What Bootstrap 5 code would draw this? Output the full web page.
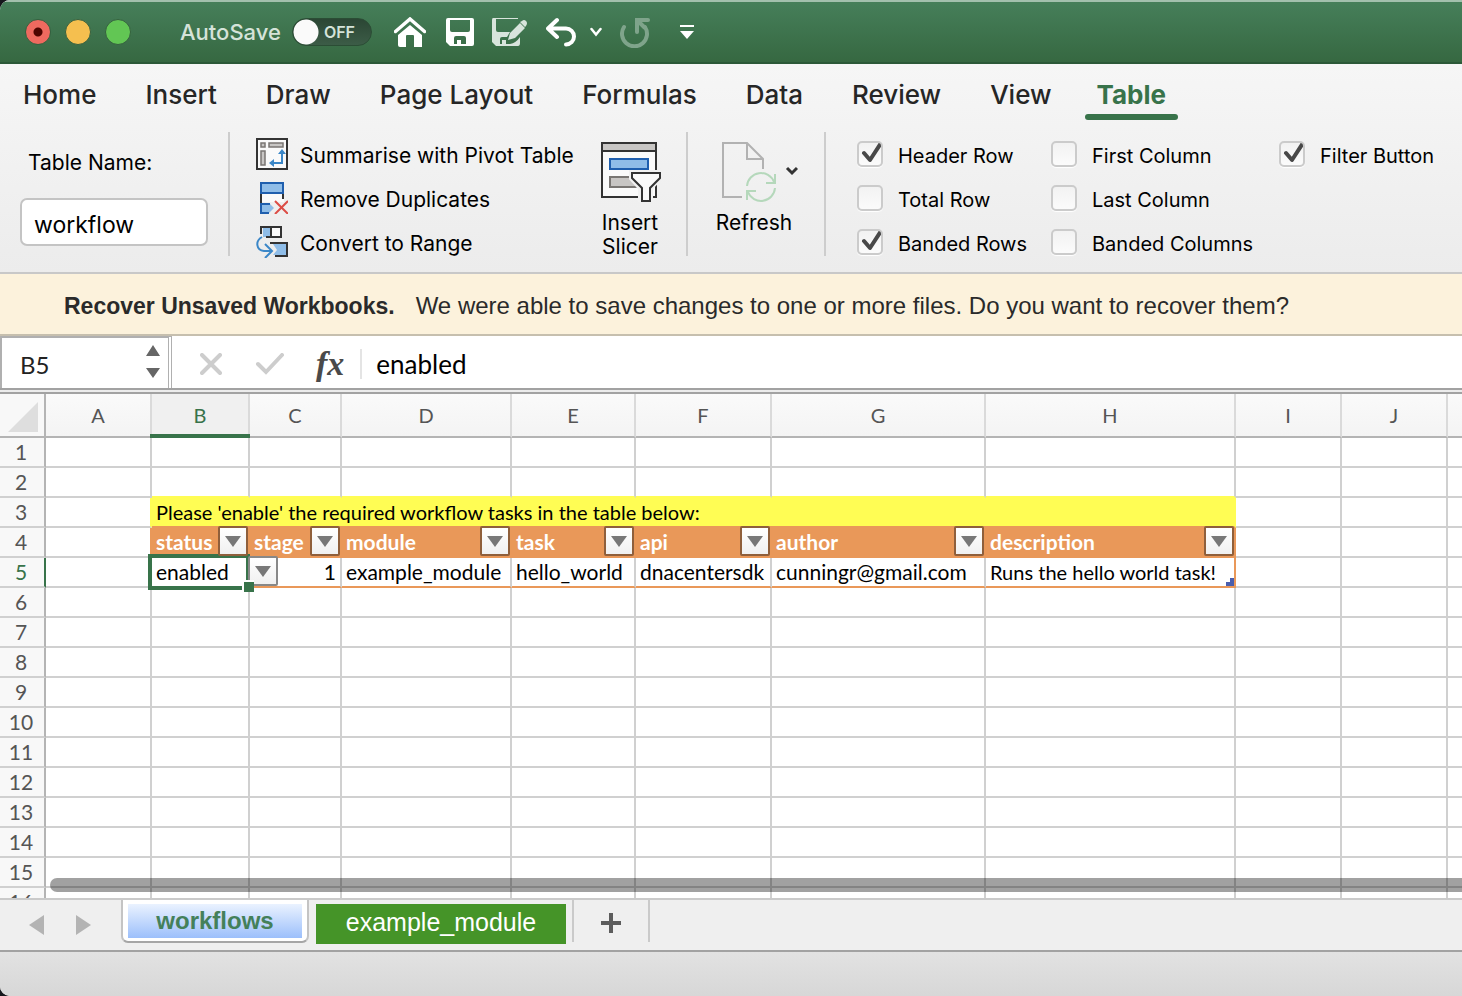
<!DOCTYPE html>
<html lang="en">
<head>
<meta charset="utf-8">
<meta name="viewport" content="width=device-width, initial-scale=1">
<title>Workbook</title>
<link href="https://cdn.jsdelivr.net/npm/bootstrap@5.3.0/dist/css/bootstrap.min.css" rel="stylesheet">
<style>
  :root { --xl-green: #38734a; --grid-line: #d0d0d0; --edge: #b4b4b4; --orange: #e99859; --yellow: #fffd54; }
  body { background: #16171c; font-family: Inter, sans-serif; color: #000; }
  svg { display: block; flex: none; }
  button { border: 0; background: none; padding: 0; color: inherit; }
  .app-window { background: #fff; border-radius: 10px 0 0 10px; }

  .title-bar { height: 64px; color: #fff; border-top: 2px solid #a3c0ad; border-bottom: 2px solid #2c5938;
    background: linear-gradient(#467f5a, #366841); padding-left: 25px; }
  .light-dot { width: 26px; height: 26px; border-radius: 50%; border: 1px solid #35603f; margin-right: 14px; }
  .dot-red { background: radial-gradient(circle, #4d0500 0 4px, #ee6a5f 5px); }
  .dot-amber { background: #f5bf4f; }
  .dot-lime { background: #62c654; }
  .autosave-text { font-size: 22px; font-weight: 500; color: #d5e3d9; margin: 0 11px 0 35px; }
  .autosave-switch { width: 80px; height: 28px; margin-right: 22px; }
  .autosave-switch .form-check-input { width: 80px; height: 28px; margin: 0; border: 1px solid #2b4d35; border-radius: 14px;
    background: radial-gradient(circle at 13px 13px, #fafafa 12px, transparent 13px), linear-gradient(#2b4634, #3c5c47); }
  .autosave-switch label { position: absolute; left: 32px; top: 4px; font-size: 16px; line-height: 20px; font-weight: 600; color: #d5e3d9; }
  .undo-btn { margin-left: 18px; }
  .redo-btn { margin: 0 28px 0 18px; }

  .ribbon { background: linear-gradient(#f6f6f6, #ececec); border-bottom: 2px solid #c8c8c8; }
  .ribbon-tabs { padding: 11px 0 0 11px; }
  .ribbon-tabs .nav-link { padding: 0 12px 6px; margin-right: 25px; font-size: 26px; line-height: 39px; font-weight: 500; color: #262626; }
  .ribbon-tabs .nav-link.active { color: var(--xl-green); font-weight: 700; position: relative; margin-left: -4px; }
  .ribbon-tabs .nav-link.active::after { content: ""; height: 6px; border-radius: 3px; background: var(--xl-green);
    position: absolute; left: 0; right: 0; bottom: 0; }
  .ribbon-body { height: 152px; padding: 12px 0 16px 20px; font-size: 21px; line-height: 24px; }
  .ribbon-rule { width: 2px; background: #cdcdcd; flex: none; height: 124px; }
  .table-name { width: 188px; margin-right: 20px; }
  .table-name label { margin: 19px 0 23px 8px; }
  .table-name .form-control { height: 48px; border: 2px solid #c4c4c4; border-radius: 7px; font-size: 23px; padding: 6px 12px 0; color: #000; background: #fff; }
  .tool-list { margin: 0 24px 0 26px; width: 320px; }
  .tool-list button { height: 44px; gap: 12px; white-space: nowrap; }
  .tool-list span, .check-col label { padding-top: 3px; }
  .big-tool { padding-top: 10px; }
  .big-tool span { display: block; margin-top: 9px; }
  .slicer-tool { width: 60px; margin-right: 26px; }
  .refresh-tool { width: 82px; margin: 0 29px 0 25px; }
  .check-col { margin-left: 31px; font-size: 20px; }
  .check-col .col-a { width: 194px; }
  .check-col .col-b { width: 228px; }
  .check-col .form-check { height: 44px; gap: 15px; white-space: nowrap; }
  .check-col .form-check-input { width: 26px; height: 26px; margin: 0; flex: none; border: 2px solid #cbcbcb; border-radius: 5px;
    background: linear-gradient(#f2f2f2, #fbfbfb); box-shadow: 0 1px 1px #fff; }
  .check-col .form-check-input:checked { background: url("data:image/svg+xml,%3Csvg xmlns='http://www.w3.org/2000/svg' viewBox='0 0 26 26'%3E%3Cpath d='M7 12l6 7L24 2' fill='none' stroke='%23484848' stroke-width='4' stroke-linecap='round' stroke-linejoin='round'/%3E%3C/svg%3E") center / 26px 26px no-repeat border-box, linear-gradient(#f2f2f2, #fbfbfb); }

  .recover-bar { height: 62px; background: #fcf2dc; border-bottom: 2px solid #c6bfae; padding: 4px 0 0 64px; color: #2a2a2a; gap: 21px;
    font: 24px/30px "Liberation Sans", sans-serif; white-space: pre; }
  .recover-bar strong { font-size: 23px; }

  .formula-bar { height: 54px; border-bottom: 2px solid #a2a2a2; font-family: Lato, sans-serif; }
  .name-box { width: 172px; border: 2px solid #b0b0b0; border-bottom: 0; border-right: 4px double #b0b0b0; padding: 6px 8px 0 18px; font-size: 24px; }
  .name-box input { width: 100px; border: 0; padding: 0; background: none; color: #222; height: 40px; outline: 0; }
  .fx-mark { font: italic bold 34px/44px "Liberation Serif", serif; color: #4a4a4a; }
  .formula-bar .formula-input { border: 0; border-left: 2px solid #e4e4e4; height: 30px; padding: 0 0 0 14px; font-size: 26px; outline: 0; min-width: 0; }
  .pane-gap { height: 4px; background: #ececec; border-bottom: 2px solid #a2a2a2; flex: none; }

  .sheet-area { font-family: Lato, sans-serif; min-height: 0; }
  .sheet { table-layout: fixed; width: 100%; border-collapse: separate; border-spacing: 0; font-size: 21px; line-height: 28px; }
  .sheet td, .sheet th { height: 30px; padding: 0 4px; border-right: 2px solid var(--grid-line); border-bottom: 2px solid var(--grid-line);
    white-space: nowrap; position: relative; }
  .sheet thead th { height: 44px; border-bottom-color: var(--edge); background: linear-gradient(#fafafa, #f4f4f4); font-size: 20px; font-weight: 400;
    color: #555; text-align: center; border-right-color: #dadada; }
  .sheet thead th.current { background: #f0f0f0; color: var(--xl-green); -webkit-text-stroke: 0; }
  .sheet thead th.current::after { content: ""; position: absolute; left: -2px; right: -2px; bottom: -2px; height: 4px; background: var(--xl-green); z-index: 1; }
  .sheet tr > th:first-child { background: #f8f8f8; border-right-color: var(--edge); color: #555; font-weight: 400; text-align: center; padding: 0 2px 0 0; }
  .sheet tbody tr > th.current { color: var(--xl-green); border-right-color: var(--xl-green); }
  .sheet tr > :last-child { border-right: 0; }
  .sheet td.y-bottom { border-bottom-color: var(--yellow); }
  .sheet td.y-right { border-right-color: var(--yellow); }
  .sheet td.o-right { border-right-color: var(--orange); }
  .sheet td.o-bottom { border-bottom-color: var(--orange); }
  .sheet td.notice { background: var(--yellow); border-color: var(--yellow); border-bottom-color: var(--orange); font-size: 20px; }
  .sheet td.field { background: var(--orange); border-color: var(--orange); color: #fff; font-weight: 700; }
  .sheet td.long-text { font-size: 20px; }
  .drop-btn { position: absolute; top: -2px; right: 0; width: 30px; height: 30px; border: 2px solid #8f5f3b; border-radius: 2px;
    background: linear-gradient(#fff, #f0f0f0); display: flex; align-items: center; justify-content: center; z-index: 2; }
  .drop-btn.pick { right: -30px; border-color: #888; }
  .cell-frame { position: absolute; inset: -4px -2px -4px -4px; border: 4px solid var(--xl-green); z-index: 1; }
  .cell-handle { position: absolute; right: -6px; bottom: -6px; width: 12px; height: 12px; background: var(--xl-green); border: solid #fff; border-width: 2px 0 0 2px; z-index: 3; }
  .table-corner { position: absolute; right: 0; bottom: 0; }
  .h-scroll { position: absolute; left: 50px; right: -10px; bottom: 6px; height: 14px; border-radius: 7px; background: rgba(0, 0, 0, .37); }

  .tab-bar { height: 54px; background: #efefef; border-top: 2px solid #cacaca; border-bottom: 2px solid #a2a2a2; font: 24px/34px "Liberation Sans", sans-serif; }
  .sheet-tab { width: 188px; height: 45px; margin: -2px 7px 0 5px; padding: 6px 5px 5px; background: #fff; border: 2px solid #c4c4c4; border-top: 0;
    border-bottom-color: #a6a6a6; border-radius: 0 0 7px 7px; }
  .sheet-tab span { display: block; background: linear-gradient(#eaf2ff, #9cbffb); color: #44805a; font-weight: 700; }
  .green-tab { width: 250px; height: 40px; background: #459428; color: #fff; margin: 4px 6px 0 0; padding-bottom: 4px; font-size: 25px; }
  .add-tab { width: 78px; height: 42px; border: solid #cacaca; border-width: 0 2px; padding-top: 4px; }
  .status-strip { height: 44px; background: linear-gradient(#e2e2e2, #d7d7d7); }
</style>
</head>
<body>
<div class="app-window d-flex flex-column vh-100 overflow-hidden">
  <header class="title-bar d-flex align-items-center flex-shrink-0">
    <button class="light-dot dot-red" aria-label="Close"></button>
    <button class="light-dot dot-amber" aria-label="Minimise"></button>
    <button class="light-dot dot-lime" aria-label="Zoom"></button>
    <span class="autosave-text">AutoSave</span>
    <div class="autosave-switch position-relative">
      <input class="form-check-input" type="checkbox" id="autosave"><label for="autosave">OFF</label>
    </div>
    <button aria-label="Home"><svg width="32" height="30" viewBox="0 0 32 30"><path d="M1.500 14.500L16 2l14.500 12.500" fill="none" stroke="#fff" stroke-width="3.500" stroke-linecap="round"/><path fill="#fff" d="M4 18L16 8l12 10v12h-8V19q0-1-1-1h-6q-1 0-1 1v11H6q-2 0-2-2z"/></svg></button>
    <button class="ms-3 ps-1" aria-label="Save"><svg width="28" height="28" viewBox="0 0 28 28"><path fill="#fff" fill-rule="evenodd" d="M2 0h24q2 0 2 2v24q0 2-2 2H4l-4-4V2q0-2 2-2zm2 2v10q0 2 2 2h16q2 0 2-2V2zm4 24h3v-4h4v4h5v-6q0-2-2-2h-8q-2 0-2 2z"/></svg></button>
    <button class="ms-3" aria-label="Save and edit"><svg width="38" height="30" viewBox="0 0 38 30"><path fill="#d8e4dc" fill-rule="evenodd" d="M3 1h25v1H6v11q0 2 2 2h12l-3 5h-5q-2 0-2 2v5h2v-4h4v4h4q6-1 10-7v6q0 3-2 3H6l-4-4V3q0-2 1-2z"/><path fill="#d8e4dc" d="M18 23l2-7L30 6l5 5-10 10zM32 4q2-2 4 0 2 2 0 5l-1 1-5-5z"/></svg></button>
    <button class="undo-btn" aria-label="Undo"><svg width="32" height="30" viewBox="0 0 32 30"><path d="M11 3L2 11.500l9 8.500M3 11.500h17a8 8 0 0 1 0 16" fill="none" stroke="#fff" stroke-width="4" stroke-linecap="round" stroke-linejoin="round"/></svg></button>
    <button class="ms-2 ps-1" aria-label="Undo history"><svg width="12" height="10" viewBox="0 0 12 10"><path d="M1.500 2L6 7.500 10.500 2" fill="none" stroke="#fff" stroke-width="2.500" stroke-linecap="round"/></svg></button>
    <button class="redo-btn" aria-label="Redo"><svg width="32" height="32" viewBox="0 0 32 32"><path d="M4 11a12.500 12.500 0 1 0 21 0M28 4H17v12" fill="none" stroke="#7fa48b" stroke-width="4" stroke-linecap="round"/><path d="M18 5l7 7" stroke="#7fa48b" stroke-width="4"/></svg></button>
    <button aria-label="Customise toolbar"><svg width="14" height="14" viewBox="0 0 14 14"><path fill="#fff" d="M0 0h14v2H0zm0 6h14l-7 8z"/></svg></button>
  </header>

  <section class="ribbon flex-shrink-0">
    <nav class="ribbon-tabs nav flex-nowrap text-nowrap">
      <a class="nav-link" href="#">Home</a><a class="nav-link" href="#">Insert</a><a class="nav-link" href="#">Draw</a><a class="nav-link" href="#">Page Layout</a><a class="nav-link" href="#">Formulas</a><a class="nav-link" href="#">Data</a><a class="nav-link" href="#">Review</a><a class="nav-link" href="#">View</a><a class="nav-link active" href="#">Table</a>
    </nav>
    <div class="ribbon-body d-flex">
      <div class="table-name flex-shrink-0">
        <label for="tname" class="d-block">Table Name:</label>
        <input id="tname" class="form-control" value="workflow">
      </div>
      <div class="ribbon-rule"></div>
      <div class="tool-list flex-shrink-0">
        <button class="d-flex align-items-center"><svg width="32" height="32" viewBox="0 0 32 32"><path fill="#fafafa" stroke="#333" stroke-width="2" d="M1 1h30v30H1z"/><g fill="#c8c6c4" stroke="#797673" stroke-width="1.500"><path d="M5 5h4v4H5zM13 5h14v4H13zM5 13h4v14H5z"/></g><path d="M26 14v11H16" fill="none" stroke="#3b87c8" stroke-width="2"/><path fill="#3b87c8" d="M22 16l4-5 4 5zM18 21l-5 4 5 4z"/></svg><span>Summarise with Pivot Table</span></button>
        <button class="d-flex align-items-center"><svg width="32" height="32" viewBox="0 0 32 32"><path fill="#fafafa" d="M4 12h24v8H4z"/><path d="M5 12v9M27 12v5" stroke="#333" stroke-width="2"/><path fill="#8fbde8" stroke="#1f5fae" stroke-width="2" d="M5 1h22v10H5z"/><path fill="#8fbde8" d="M5 22h9l4 4-5 5H5z"/><path fill="none" stroke="#1f5fae" stroke-width="2" d="M14 22H5v9h8"/><path d="M19 19l13 13M32 19L19 32" stroke="#dc4d46" stroke-width="2"/></svg><span>Remove Duplicates</span></button>
        <button class="d-flex align-items-center"><svg width="32" height="32" viewBox="0 0 32 32"><path fill="#8fbde8" d="M7 2h8v9H7z"/><path fill="#fafafa" d="M16 2h9v9h-9z"/><path d="M5 8V1h20v10H10M15 1v10M14 17h17v13H19" fill="none" stroke="#333" stroke-width="2"/><path fill="#8fbde8" d="M17 18h13v11H17l4-5z"/><path d="M6 11c-7 4-6 13 2 14h8M9 18l7 7-7 7" fill="none" stroke="#3b87c8" stroke-width="2"/></svg><span>Convert to Range</span></button>
      </div>
      <button class="big-tool slicer-tool flex-shrink-0 d-flex flex-column align-items-center"><svg width="62" height="60" viewBox="0 0 62 60"><path fill="#fafafa" stroke="#333" stroke-width="2" d="M3 1h54v54H3z"/><path fill="#c8c6c4" stroke="#333" stroke-width="2" d="M3 1h54v8H3z"/><path fill="#8fbde8" stroke="#1f5fae" stroke-width="2" d="M11 17h38v10H11z"/><path fill="#c8c6c4" stroke="#797673" stroke-width="2" d="M11 35h26v10H11z"/><path fill="#f1f1f1" stroke="#f1f1f1" stroke-width="6" d="M33 31h27v5l-9 10v13h-9V46l-9-10z"/><path fill="#fafafa" stroke="#333" stroke-width="2" d="M33 31h28v5L51 46v13h-8V46L33 36z"/></svg><span>Insert<br>Slicer</span></button>
      <div class="ribbon-rule"></div>
      <button class="big-tool refresh-tool flex-shrink-0 d-flex flex-column align-items-center"><svg width="88" height="60" viewBox="-1 0 88 60"><g fill="none" stroke="#b2b2b2" stroke-width="2"><path d="M31 55H12V1h24l16 16v10"/><path d="M36 1v16h16"/></g><g fill="none" stroke="#b5d8bb" stroke-width="2"><path d="M36 44a14 14 0 0 1 27-4M64 46a14 14 0 0 1-27 4M64 32v9h-9M36 58v-9h9"/></g><path d="M76 26l5 5 5-5" fill="none" stroke="#333" stroke-width="3"/></svg><span>Refresh</span></button>
      <div class="ribbon-rule"></div>
      <div class="check-col d-flex">
        <div class="col-a">
          <div class="form-check d-flex align-items-center p-0 m-0"><input class="form-check-input" type="checkbox" id="c1" checked><label for="c1">Header Row</label></div>
          <div class="form-check d-flex align-items-center p-0 m-0"><input class="form-check-input" type="checkbox" id="c2"><label for="c2">Total Row</label></div>
          <div class="form-check d-flex align-items-center p-0 m-0"><input class="form-check-input" type="checkbox" id="c3" checked><label for="c3">Banded Rows</label></div>
        </div>
        <div class="col-b">
          <div class="form-check d-flex align-items-center p-0 m-0"><input class="form-check-input" type="checkbox" id="c4"><label for="c4">First Column</label></div>
          <div class="form-check d-flex align-items-center p-0 m-0"><input class="form-check-input" type="checkbox" id="c5"><label for="c5">Last Column</label></div>
          <div class="form-check d-flex align-items-center p-0 m-0"><input class="form-check-input" type="checkbox" id="c6"><label for="c6">Banded Columns</label></div>
        </div>
        <div>
          <div class="form-check d-flex align-items-center p-0 m-0"><input class="form-check-input" type="checkbox" id="c7" checked><label for="c7">Filter Button</label></div>
        </div>
      </div>
    </div>
  </section>

  <div class="recover-bar d-flex align-items-center flex-shrink-0"><strong>Recover Unsaved Workbooks.</strong><span>We were able to save changes to one or more files. Do you want to recover them?</span></div>

  <div class="formula-bar d-flex flex-shrink-0">
    <div class="name-box d-flex justify-content-between flex-shrink-0">
      <input aria-label="Name box" value="B5">
      <svg width="14" height="34" viewBox="0 0 14 34"><path fill="#666" d="M0 12L7 1l7 11zM0 24h14L7 34z"/></svg>
    </div>
    <div class="d-flex align-items-center flex-grow-1 pt-1">
      <button class="ms-4 ps-1" aria-label="Cancel"><svg width="22" height="22" viewBox="0 0 22 22"><path d="M2 2l18 18M20 2L2 20" stroke="#cdcdcd" stroke-width="4" stroke-linecap="round"/></svg></button>
      <button class="ms-4 ps-2 pe-4" aria-label="Enter"><svg width="30" height="22" viewBox="-2 0 30 22"><path d="M2 11l8 8L26 2" fill="none" stroke="#cdcdcd" stroke-width="4" stroke-linecap="round"/></svg></button>
      <button class="fx-mark ms-2 me-3" aria-label="Insert function">fx</button>
      <input class="formula-input flex-grow-1" aria-label="Formula" value="enabled">
    </div>
  </div>
  <div class="pane-gap"></div>

  <main class="sheet-area flex-grow-1 position-relative overflow-hidden">
    <table class="sheet">
      <colgroup><col style="width:46px"><col style="width:106px"><col style="width:98px"><col style="width:92px"><col style="width:170px"><col style="width:124px"><col style="width:136px"><col style="width:214px"><col style="width:250px"><col style="width:106px"><col style="width:106px"><col></colgroup>
      <thead><tr><th><svg class="ms-auto mt-1 me-1" width="30" height="30" viewBox="0 0 30 30"><path fill="#dedede" d="M30 0v30H0z"/></svg></th><th>A</th><th class="current">B</th><th>C</th><th>D</th><th>E</th><th>F</th><th>G</th><th>H</th><th>I</th><th>J</th><th></th></tr></thead>
      <tbody id="rows">
        <tr><th>1</th><td></td><td></td><td></td><td></td><td></td><td></td><td></td><td></td><td></td><td></td><td></td></tr>
        <tr><th>2</th><td></td><td class="y-bottom"></td><td class="y-bottom"></td><td class="y-bottom"></td><td class="y-bottom"></td><td class="y-bottom"></td><td class="y-bottom"></td><td class="y-bottom"></td><td></td><td></td><td></td></tr>
        <tr><th>3</th><td class="y-right"></td><td class="notice" colspan="7">Please 'enable' the required workflow tasks in the table below:</td><td></td><td></td><td></td></tr>
        <tr><th>4</th><td class="o-right"></td><td class="field">status</td><td class="field">stage</td><td class="field">module</td><td class="field">task</td><td class="field">api</td><td class="field">author</td><td class="field">description</td><td></td><td></td><td></td></tr>
        <tr><th class="current">5</th><td></td>
          <td>enabled<span class="cell-frame"></span><button class="drop-btn pick" aria-label="Pick a value"><svg width="16" height="11" viewBox="0 0 16 11"><path fill="#777" d="M0 0h16L8 11z"/></svg></button><span class="cell-handle"></span></td>
          <td class="o-bottom text-end">1</td><td class="o-bottom">example_module</td><td class="o-bottom">hello_world</td><td class="o-bottom">dnacentersdk</td><td class="o-bottom">cunningr@gmail.com</td>
          <td class="o-bottom o-right long-text">Runs the hello world task!<svg class="table-corner" width="8" height="8" viewBox="0 0 8 8"><path fill="#4a5fae" d="M4 0h4v8H0V4h4z"/></svg></td><td></td><td></td><td></td></tr>
      </tbody>
    </table>
    <div class="h-scroll"></div>
  </main>

  <nav class="tab-bar d-flex flex-shrink-0 overflow-hidden">
    <button class="ms-4 ps-1" aria-label="Previous sheet"><svg width="16" height="20" viewBox="0 0 16 20"><path fill="#b3b3b3" d="M16 0v20L1 10z"/></svg></button>
    <button class="ms-4 ps-2 me-4" aria-label="Next sheet"><svg width="16" height="20" viewBox="0 0 16 20"><path fill="#b3b3b3" d="M0 0v20l15-10z"/></svg></button>
    <button class="sheet-tab"><span>workflows</span></button>
    <button class="green-tab">example_module</button>
    <button class="add-tab d-flex align-items-center justify-content-center" aria-label="Add sheet"><svg width="20" height="20" viewBox="0 0 20 20"><path d="M10 0v20M0 10h20" stroke="#5c5c5c" stroke-width="4"/></svg></button>
  </nav>
  <footer class="status-strip flex-shrink-0"></footer>
</div>
<script>
  // Filter drop-down on every header field of the table
  document.querySelectorAll('.field').forEach(td => td.insertAdjacentHTML('beforeend',
    '<button class="drop-btn" aria-label="Filter"><svg width="16" height="11" viewBox="0 0 16 11"><path fill="#777" d="M0 0h16L8 11z"/></svg></button>'));
  // Empty rows below the table
  const rows = document.getElementById('rows');
  for (let n = 6; n <= 16; n++) rows.insertAdjacentHTML('beforeend', '<tr><th>' + n + '</th>' + '<td></td>'.repeat(11) + '</tr>');
</script>
<script src="https://cdn.jsdelivr.net/npm/bootstrap@5.3.0/dist/js/bootstrap.bundle.min.js"></script>
</body>
</html>
